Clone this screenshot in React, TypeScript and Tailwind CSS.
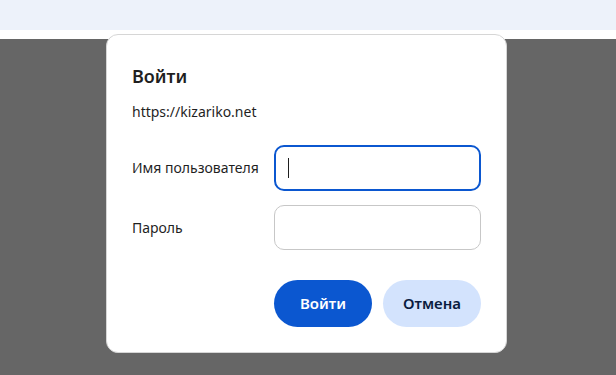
export default function App() {
  return (
    <div
      className="relative w-[616px] h-[375px] overflow-hidden bg-white flex flex-col"
      style={{ fontFamily: '"Noto Sans", "Open Sans", sans-serif' }}
    >
      <div className="h-[30px] bg-[#edf2fa]" />
      <div className="h-[9px] bg-white" />
      <div className="flex-1 bg-[#666666]" />

      <div className="absolute left-[106px] top-[34px] w-[401px] h-[319px] rounded-[12px] border border-[#d6d6d6] bg-white px-[25px] pt-[29px] text-[#1f1f1f]">
        <div className="text-[18px] leading-[24px] font-semibold">Войти</div>
        <div className="mt-[14px] text-[14px] leading-[20px]">https://kizariko.net</div>

        <div className="mt-[23px] flex items-center">
          <div className="w-[142px] text-[14px] leading-[20px]">Имя пользователя</div>
          <div className="flex-1 h-[46px] rounded-[10px] border-2 border-[#0b57d0] flex items-center pl-[12px]">
            <div className="w-[1px] h-[20px] bg-[#1f1f1f]" />
          </div>
        </div>

        <div className="mt-[14px] flex items-center">
          <div className="w-[142px] text-[14px] leading-[20px]">Пароль</div>
          <div className="flex-1 h-[45px] rounded-[10px] border border-[#c7c7c7]" />
        </div>

        <div className="mt-[30px] flex justify-end gap-[11px]">
          <button className="w-[98px] h-[47px] rounded-full bg-[#0b57d0] text-white text-[15px] font-semibold">
            Войти
          </button>
          <button className="w-[98px] h-[47px] rounded-full bg-[#d3e3fd] text-[#0a1c40] text-[15px] font-semibold">
            Отмена
          </button>
        </div>
      </div>
    </div>
  );
}
